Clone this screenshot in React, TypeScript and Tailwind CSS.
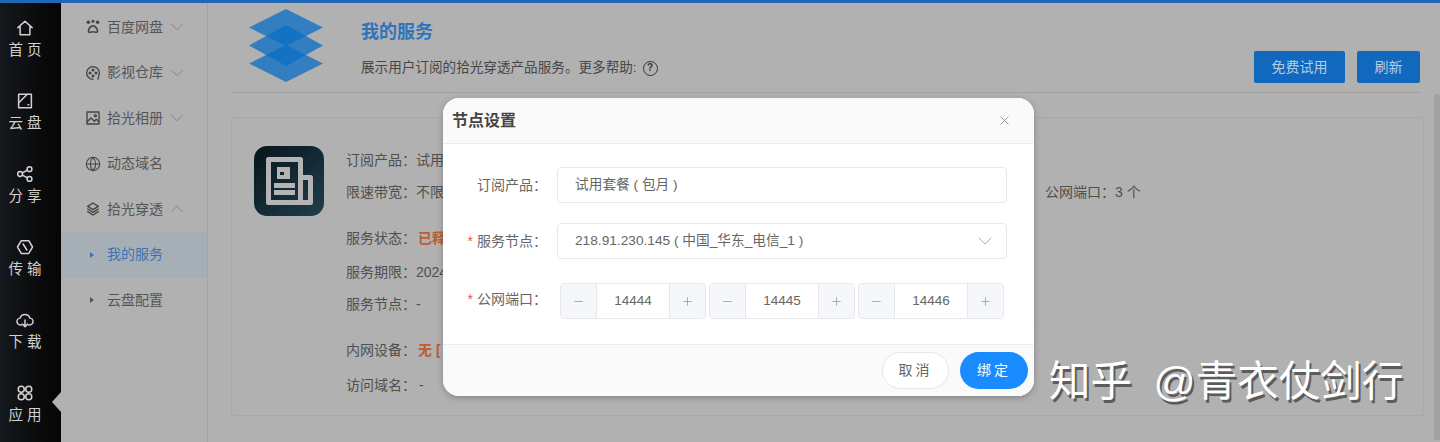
import { ChevronDown, ChevronUp, Globe, Minus, Plus, X } from 'lucide-react';
import type { ReactNode } from 'react';

const font = 'font-["Liberation_Sans","Noto_Sans_CJK_SC",sans-serif]';

function Stroke({ children, size = 18 }: { children: ReactNode; size?: number }) {
  return (
    <svg width={size} height={size} viewBox="0 0 24 24" fill="none" stroke="currentColor" strokeWidth="2" strokeLinejoin="round" strokeLinecap="round">
      {children}
    </svg>
  );
}

const railItems = [
  { label: '首 页', icon: <path d="M2.5 11.5 12 3l9.5 8.5M5.5 10v11h13V10" /> },
  { label: '云 盘', icon: <><rect x="3.5" y="3" width="17" height="18" /><path d="M4 14 15 3M16 17h1" /></> },
  { label: '分 享', icon: <><circle cx="5.5" cy="12" r="3.2" /><circle cx="18" cy="5.5" r="3.2" /><circle cx="18" cy="18.5" r="3.2" /><path d="m8.5 10.5 6.5-3.5M8.5 13.5l6.5 3.5" /></> },
  { label: '传 输', icon: <><path d="M7 3.5h10l5 8.5-5 8.5H7L2 12z" /><path d="m9.5 8 5 8" /></> },
  { label: '下 载', icon: <><path d="M7 18.5H6a4.5 4.5 0 0 1-.5-9 6.8 6.8 0 0 1 13 0 4.5 4.5 0 0 1-.5 9h-1" /><path d="M12 12v9M8.5 17.5 12 21l3.5-3.500" /></> },
  { label: '应 用', icon: <><circle cx="7" cy="7" r="4" /><circle cx="17" cy="7" r="4" /><circle cx="7" cy="17" r="4" /><circle cx="17" cy="17" r="4" /></> },
];

const paw = (
  <svg width="16" height="16" viewBox="0 0 24 24" fill="currentColor">
    <circle cx="5" cy="5" r="2.6" /><circle cx="19" cy="5" r="2.6" /><circle cx="12" cy="3.5" r="2.2" />
    <path d="M12 9c-4 0-8 5-8 9 0 3 2.500 3.500 4 3 1.500-.4 2.500-.8 4-.8s2.500.4 4 .8c1.500.5 4 0 4-3 0-4-4-9-8-9zm0 2.500c2.500 0 5.500 3.500 5.500 6.500 0 1-1 1-2 .7-1.200-.4-2.200-.7-3.500-.7s-2.300.3-3.500.7c-1 .3-2 .3-2-.7 0-3 3-6.500 5.500-6.500z" fillRule="evenodd" />
  </svg>
);

const menuItems = [
  { label: '百度网盘', icon: paw, arrow: 'down' },
  {
    label: '影视仓库',
    arrow: 'down',
    icon: <Stroke><path d="M12 21.500A9.500 9.500 0 1 1 21.500 12c0 4-2 7-2 9.500" /><circle cx="12" cy="7.500" r="1.300" fill="currentColor" /><circle cx="12" cy="16.500" r="1.300" fill="currentColor" /><circle cx="7.500" cy="12" r="1.300" fill="currentColor" /><circle cx="16.500" cy="12" r="1.300" fill="currentColor" /></Stroke>,
  },
  {
    label: '拾光相册',
    arrow: 'down',
    icon: <Stroke><rect x="3" y="3" width="18" height="18" /><path d="m3 18 6-6 5 5 3-3 4 4" /><circle cx="15.500" cy="8.500" r="1.500" /></Stroke>,
  },
  { label: '动态域名', icon: <Globe size={16} strokeWidth={1.6} /> },
  {
    label: '拾光穿透',
    arrow: 'up',
    icon: <Stroke><path d="M12 3 4 8l8 5 8-5zM4 12l8 5 8-5M4 16l8 5 8-5" /></Stroke>,
  },
];

function Rail() {
  return (
    <div className="relative flex w-[61px] shrink-0 flex-col bg-gradient-to-r from-[#15181c] to-[#050505] pr-[11px] text-[#d2d2d2]">
      {railItems.map((item) => (
        <div key={item.label} className="flex h-[73px] flex-col items-center pt-[16px]">
          {<Stroke>{item.icon}</Stroke>}
          <span className="mt-[3px] whitespace-pre text-[14.500px] leading-[20px]">{item.label}</span>
        </div>
      ))}
      <span className="absolute right-0 top-[389px] h-0 w-0 border-y-[10px] border-r-[9px] border-y-transparent border-r-[#b1b1b1]" />
    </div>
  );
}

function Menu() {
  return (
    <div className="flex w-[147px] shrink-0 flex-col border-r border-[#a4a4a4] pt-[1.500px] text-[14px] text-[#555]">
      {menuItems.map((item) => (
        <div key={item.label} className="flex h-[45.500px] items-center pl-[24px]">
          <span className="flex w-[16px] justify-center text-[#444]">{item.icon}</span>
          <span className="ml-[6px]">{item.label}</span>
          {item.arrow === 'down' && <ChevronDown size={22} strokeWidth={0.8} className="ml-[3px] text-[#777]" />}
          {item.arrow === 'up' && <ChevronUp size={22} strokeWidth={0.8} className="ml-[3px] text-[#777]" />}
        </div>
      ))}
      <div className="flex h-[45.500px] items-center bg-[#a6afb6] pl-[29px] text-[#3f71b5]">
        <span className="h-0 w-0 border-y-[3px] border-l-[4px] border-y-transparent border-l-[#3f71b5]" />
        <span className="ml-[13px]">我的服务</span>
      </div>
      <div className="flex h-[45.500px] items-center pl-[29px]">
        <span className="h-0 w-0 border-y-[3px] border-l-[4px] border-y-transparent border-l-[#555]" />
        <span className="ml-[13px]">云盘配置</span>
      </div>
    </div>
  );
}

function Logo() {
  return (
    <svg width="74" height="73" viewBox="0 0 74 73" className="shrink-0">
      <path d="M37 0 74 18.500 37 37 0 18.500z" fill="#0a6fc5" fillOpacity="0.76" />
      <path d="M37 16 74 36.500 37 57 0 36.500z" fill="#0a6fc5" fillOpacity="0.76" />
      <path d="M37 36 74 54.500 37 73 0 54.500z" fill="#0a6fc5" fillOpacity="0.76" />
    </svg>
  );
}

function Line({ label, children, className = '' }: { label: string; children?: ReactNode; className?: string }) {
  return (
    <div className={`whitespace-nowrap text-[14px] leading-[20px] text-[#4f4f4f] ${className}`}>
      {label}：{children}
    </div>
  );
}

function Main() {
  return (
    <div className="flex min-w-0 flex-1 flex-col pl-[24px]">
      <div className="flex h-[90px] w-[1188px] border-b border-[#9f9f9f] pl-[17px] pt-[6px]">
        <Logo />
        <div className="ml-[38px] flex-1">
          <h1 className="mt-[11px] text-[18px] font-bold leading-[24px] text-[#2f74bb]">我的服务</h1>
          <p className="mt-[14px] flex items-center text-[13.600px] leading-[20px] text-[#474747]">
            展示用户订阅的拾光穿透产品服务。更多帮助:
            <span className="ml-[6px] flex h-[15px] w-[15px] items-center justify-center rounded-full border-[1.500px] border-[#333] text-[10px] font-bold text-[#333]">?</span>
          </p>
        </div>
        <div className="flex gap-[12px] self-end pb-[9px]">
          <button className="h-[32px] w-[91px] rounded-[2px] bg-[#1268bd] text-[14px] text-[#b4cde6]">免费试用</button>
          <button className="h-[32px] w-[63px] rounded-[2px] bg-[#1268bd] text-[14px] text-[#b4cde6]">刷新</button>
        </div>
      </div>
      <div className="mt-[24px] flex h-[299px] w-[1193px] -translate-x-[1px] rounded-[3px] border border-[#a8a8a8] pl-[22px] pt-[28px]">
        <div className="h-[70px] w-[70px] shrink-0 rounded-[13px] bg-gradient-to-br from-[#08151b] to-[#1f3f4e]">
          <svg width="70" height="70" viewBox="0 0 70 70" fill="none" stroke="#b4b4b4" strokeWidth="5" strokeLinejoin="round">
            <path d="M46.500 31.500h10v25h-42v-43h32v43" />
            <path d="M23 21h13v12H23zM26 26v3h4v-3z" fill="#b4b4b4" fillRule="evenodd" stroke="none" />
            <path d="M20 37h21v5H20zM20 44h21v5H20z" fill="#b4b4b4" stroke="none" />
          </svg>
        </div>
        <div className="ml-[22px] flex flex-1 flex-col">
          <Line label="订阅产品" className="mt-[4px]">试用套餐 ( 包月 )</Line>
          <div className="mt-[12px] flex">
            <Line label="限速带宽" className="w-[699px]">不限速</Line>
            <Line label="公网端口">3 个</Line>
          </div>
          <Line label="服务状态" className="mt-[26px]"><b className="ml-[2px] font-bold text-[#c05a32]">已释放</b></Line>
          <Line label="服务期限" className="mt-[14px]">2024-01-01</Line>
          <Line label="服务节点" className="mt-[12px]">-</Line>
          <div className="mt-[11px] w-[1048px] border-t border-dotted border-[#a9a9a9]" />
          <Line label="内网设备" className="mt-[14px]"><b className="ml-[2px] font-bold text-[#c05a32]">无 [</b></Line>
          <Line label="访问域名" className="mt-[15px]"><span className="ml-[3px]">-</span></Line>
        </div>
      </div>
    </div>
  );
}

function Stepper({ value }: { value: number }) {
  return (
    <div className="flex h-[36px] w-[146px] rounded-[4px] border border-[#e6e8ec] text-[#8a8f96]">
      <span className="flex w-[36px] items-center justify-center rounded-l-[4px] border-r border-[#e6e8ec] bg-[#f5f7fa]"><Minus size={13} strokeWidth={1.3} /></span>
      <span className="flex flex-1 items-center justify-center text-[13.500px] text-[#666]">{value}</span>
      <span className="flex w-[36px] items-center justify-center rounded-r-[4px] border-l border-[#e6e8ec] bg-[#f5f7fa]"><Plus size={13} strokeWidth={1.3} /></span>
    </div>
  );
}

function Label({ text, required }: { text: string; required?: boolean }) {
  return (
    <label className="flex w-[104px] shrink-0 justify-end whitespace-nowrap text-[14px] text-[#666]">
      {required && <span className="mr-[4px] text-[#e05a5a]">*</span>}
      {text}：
    </label>
  );
}

function Dialog() {
  return (
    <div className="absolute left-[443px] top-[98px] flex h-[298px] w-[591px] flex-col overflow-hidden rounded-[16px] bg-white shadow-[0_2px_6px_rgba(0,0,0,0.25)]">
      <div className="flex h-[46px] shrink-0 items-center justify-between border-b border-[#ececec] bg-[#fafafa] pl-[9px] pr-[22px]">
        <span className="text-[16px] font-bold text-[#444]">节点设置</span>
        <X size={15} strokeWidth={1.1} className="text-[#777]" />
      </div>
      <div className="flex flex-1 flex-col pt-[23px]">
        <div className="flex items-center">
          <Label text="订阅产品" />
          <div className="ml-[10px] flex h-[36px] w-[450px] items-center rounded-[4px] border border-[#e6e8ec] pl-[17px] text-[13.700px] text-[#666]">试用套餐 ( 包月 )</div>
        </div>
        <div className="mt-[20px] flex items-center">
          <Label text="服务节点" required />
          <div className="ml-[10px] flex h-[36px] w-[450px] items-center justify-between rounded-[4px] border border-[#e6e8ec] pl-[17px] pr-[9px] text-[13.700px] text-[#666]">
            218.91.230.145 ( 中国_华东_电信_1 )
            <ChevronDown size={24} strokeWidth={0.8} className="text-[#999]" />
          </div>
        </div>
        <div className="mt-[24px] flex items-center">
          <div className="mb-[4px]">
            <Label text="公网端口" required />
          </div>
          <div className="ml-[13px] flex gap-[3px]">
            <Stepper value={14444} />
            <Stepper value={14445} />
            <Stepper value={14446} />
          </div>
        </div>
      </div>
      <div className="flex h-[52px] shrink-0 items-center justify-end gap-[11px] border-t border-[#ececec] bg-[#fafafa] pr-[6px]">
        <button className="h-[37px] w-[67px] rounded-full border border-[#e6e6e6] bg-white text-[14px] tracking-[3px] text-[#666]">取消</button>
        <button className="h-[37px] w-[68px] rounded-full bg-[#1a8cff] text-[14px] tracking-[3px] text-white">绑定</button>
      </div>
    </div>
  );
}

export default function App() {
  return (
    <div className={`relative flex h-[442px] w-[1440px] flex-col overflow-hidden bg-[#b1b1b1] ${font}`}>
      <div className="h-[3px] shrink-0 bg-[#1f68b8]" />
      <div className="flex min-h-0 flex-1">
        <Rail />
        <Menu />
        <Main />
      </div>
      <Dialog />
      <div className="absolute right-0 top-[94px] h-[346px] w-[6px] rounded-t-[3px] bg-[#a1a1a1]" />
      <div className="absolute left-[1049px] top-[352px] whitespace-nowrap text-[41.500px] leading-[60px] text-white [word-spacing:10px] [text-shadow:2px_3px_0_#5c5c5c]">
        知乎 @青衣仗剑行
      </div>
    </div>
  );
}
